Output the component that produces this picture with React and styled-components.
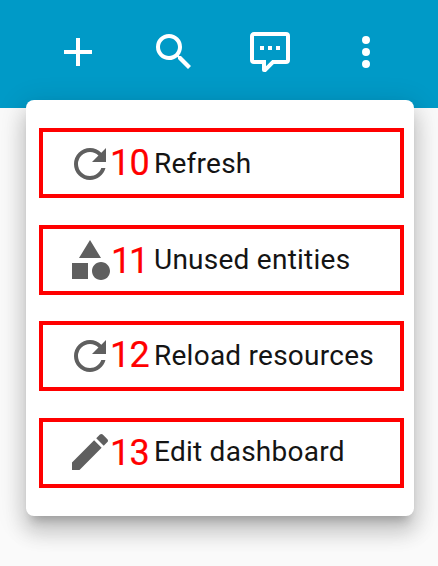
import React from "react";
import styled, { createGlobalStyle } from "styled-components";

const GlobalStyle = createGlobalStyle`
  body {
    margin: 0;
    background: #fafafa;
    font-family: Roboto, "Liberation Sans", sans-serif;
  }
`;

const Page = styled.div`
  height: 566px;
  overflow: hidden;
  background: #fafafa;
`;

const Toolbar = styled.header`
  box-sizing: border-box;
  height: 108px;
  padding: 28px 0 0 54px;
  display: flex;
  gap: 48px;
  background: #009ac7;
  color: #fff;
`;

const IconButton = styled.button`
  width: 48px;
  height: 48px;
  padding: 0;
  border: 0;
  background: none;
  color: inherit;
`;

const Glyph = styled.svg`
  display: block;
  flex: none;
  width: 48px;
  height: 48px;
  fill: currentColor;
`;

const Menu = styled.ul`
  position: relative;
  box-sizing: border-box;
  width: 388px;
  margin: -8px 0 0 26px;
  padding: 16px 0;
  list-style: none;
  background: #fff;
  border-radius: 8px;
  box-shadow:
    0 10px 10px -6px rgba(0, 0, 0, 0.2),
    0 16px 20px 2px rgba(0, 0, 0, 0.14),
    0 6px 28px 4px rgba(0, 0, 0, 0.12);
`;

const MenuItem = styled.li`
  position: relative;
  box-sizing: border-box;
  height: 96px;
  padding-left: 40px;
  display: flex;
  align-items: center;
  gap: 40px;
  color: #5f5f5f;
`;

const Label = styled.span`
  color: #141414;
  font-size: 28px;
  line-height: 40px;
  letter-spacing: 0.25px;
  white-space: nowrap;
`;

const Outline = styled.span`
  position: absolute;
  box-sizing: border-box;
  top: ${(p) => p.$top}px;
  left: 13px;
  width: 365px;
  height: 70px;
  border: 4px solid #f00;
`;

const StepNumber = styled.span`
  position: absolute;
  top: ${(p) => p.$top}px;
  left: ${(p) => p.$left}px;
  color: #f00;
  font: 36px/40px Roboto, Arial, sans-serif;
  letter-spacing: ${(p) => p.$tracking}px;
  -webkit-text-stroke: 0.2px #f00;
`;

const icons = {
  plus: "M19,13H13V19H11V13H5V11H11V5H13V11H19V13Z",
  magnify:
    "M9.5,3A6.5,6.5 0 0,1 16,9.5C16,11.11 15.41,12.59 14.44,13.73L14.71,14H15.5L20.5,19L19,20.5L14,15.5V14.71L13.73,14.44C12.59,15.41 11.11,16 9.5,16A6.5,6.5 0 0,1 3,9.5A6.5,6.5 0 0,1 9.5,3M9.5,5C7,5 5,7 5,9.5C5,12 7,14 9.5,14C12,14 14,12 14,9.5C14,7 12,5 9.5,5Z",
  comment:
    "M9,22A1,1 0 0,1 8,21V18H4A2,2 0 0,1 2,16V4C2,2.89 2.9,2 4,2H20A2,2 0 0,1 22,4V16A2,2 0 0,1 20,18H13.9L10.2,21.71C10,21.9 9.75,22 9.5,22H9M10,16V19.08L13.08,16H20V4H4V16H10M17,11H15V9H17V11M13,11H11V9H13V11M9,11H7V9H9V11Z",
  dots:
    "M12,16A2,2 0 0,1 14,18A2,2 0 0,1 12,20A2,2 0 0,1 10,18A2,2 0 0,1 12,16M12,10A2,2 0 0,1 14,12A2,2 0 0,1 12,14A2,2 0 0,1 10,12A2,2 0 0,1 12,10M12,4A2,2 0 0,1 14,6A2,2 0 0,1 12,8A2,2 0 0,1 10,6A2,2 0 0,1 12,4Z",
  refresh:
    "M17.65,6.35C16.2,4.9 14.21,4 12,4A8,8 0 0,0 4,12A8,8 0 0,0 12,20C15.73,20 18.84,17.45 19.73,14H17.65C16.83,16.33 14.61,18 12,18A6,6 0 0,1 6,12A6,6 0 0,1 12,6C13.66,6 15.14,6.69 16.22,7.78L13,11H20V4L17.65,6.35Z",
  shapes:
    "M11,13.5V21.5H3V13.5H11M12,2L17.5,11H6.5L12,2M17.5,13C20,13 22,15 22,17.5C22,20 20,22 17.5,22C15,22 13,20 13,17.5C13,15 15,13 17.5,13Z",
  pencil:
    "M20.71,7.04C21.1,6.65 21.1,6 20.71,5.63L18.37,3.29C18,2.9 17.35,2.9 16.96,3.29L15.12,5.12L18.87,8.87M3,17.25V21H6.75L17.81,9.93L14.06,6.18L3,17.25Z",
};

const actions = [
  { icon: "plus", label: "Add" },
  { icon: "magnify", label: "Search" },
  { icon: "comment", label: "Assist" },
  { icon: "dots", label: "Menu" },
];

const items = [
  { icon: "refresh", step: 10, label: "Refresh", outlineTop: 12, stepTop: 27, stepLeft: 84, tracking: -0.7 },
  { icon: "shapes", step: 11, label: "Unused entities", outlineTop: 13, stepTop: 29, stepLeft: 85, tracking: -2.2 },
  { icon: "refresh", step: 12, label: "Reload resources", outlineTop: 13, stepTop: 27, stepLeft: 84, tracking: -0.7 },
  { icon: "pencil", step: 13, label: "Edit dashboard", outlineTop: 14, stepTop: 29, stepLeft: 84, tracking: -0.7 },
];

function Icon({ name }) {
  return (
    <Glyph viewBox="0 0 24 24" aria-hidden="true">
      <path d={icons[name]} />
    </Glyph>
  );
}

export default function App() {
  return (
    <Page>
      <GlobalStyle />
      <Toolbar>
        {actions.map((a) => (
          <IconButton key={a.icon} aria-label={a.label}>
            <Icon name={a.icon} />
          </IconButton>
        ))}
      </Toolbar>
      <Menu>
        {items.map((item) => (
          <MenuItem key={item.step}>
            <Icon name={item.icon} />
            <Label>{item.label}</Label>
            <Outline $top={item.outlineTop} />
            <StepNumber $top={item.stepTop} $left={item.stepLeft} $tracking={item.tracking}>
              {item.step}
            </StepNumber>
          </MenuItem>
        ))}
      </Menu>
    </Page>
  );
}
